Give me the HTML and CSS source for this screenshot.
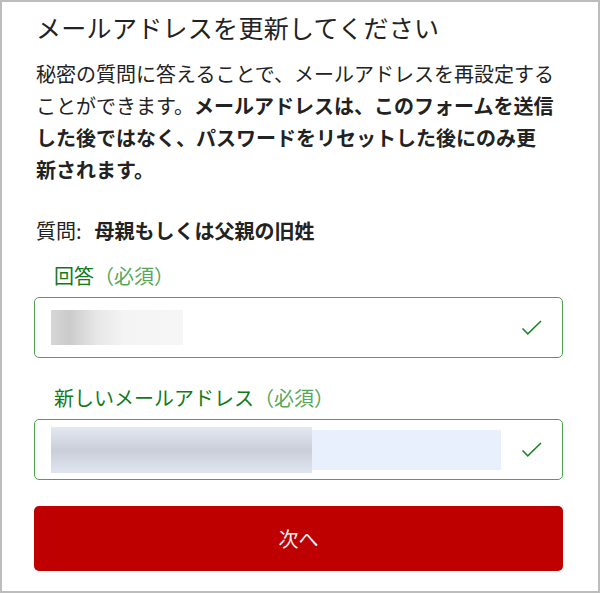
FILE: index.html
```html
<!DOCTYPE html>
<html lang="ja">
<head>
    <meta charset="UTF-8">
    <meta name="viewport" content="width=device-width, initial-scale=1.0">
    <title>メールアドレスを更新してください</title>
    <link rel="stylesheet" href="styles.css">
</head>
<body>
    <div class="frame">
        <h1>メールアドレスを更新してください</h1>

        <p class="intro">秘密の質問に答えることで、メールアドレスを再設定することができます。<strong>メールアドレスは、このフォームを送信した後ではなく、パスワードをリセットした後にのみ更<br>新されます。</strong></p>

        <div class="question">質問:<strong>母親もしくは父親の旧姓</strong></div>

        <div class="form-group">
            <label>回答<span class="req">（必須）</span></label>
            <div class="field">
                <div class="value">
                    <span class="blur blur-answer"></span>
                </div>
                <svg class="check" width="22" height="16" viewBox="0 0 22 16">
                    <path d="M1.5 8.5 L6.8 13.8 L20 1" fill="none" stroke="#23852a" stroke-width="1.6"/>
                </svg>
            </div>
        </div>

        <div class="form-group second">
            <label>新しいメールアドレス<span class="req">（必須）</span></label>
            <div class="field">
                <div class="value autofill">
                    <span class="blur blur-email"></span>
                </div>
                <svg class="check" width="22" height="16" viewBox="0 0 22 16">
                    <path d="M1.5 8.5 L6.8 13.8 L20 1" fill="none" stroke="#23852a" stroke-width="1.6"/>
                </svg>
            </div>
        </div>

        <button class="next-btn">次へ</button>
    </div>
</body>
</html>
```

FILE: styles.css
```css
body {
    margin: 0;
    font-family: "Noto Sans CJK JP", "Noto Sans", sans-serif;
    color: #222;
    background-color: white;
}
.frame {
    width: 600px;
    height: 593px;
    box-sizing: border-box;
    border: 2px solid #bdbdbd;
    padding: 8px 35px 0 32px;
}
h1 {
    margin: 0;
    font-size: 25px;
    font-weight: 400;
    line-height: 34px;
    padding-left: 2px;
    letter-spacing: 0.3px;
}
.intro {
    margin: 14px 0 0;
    font-size: 20px;
    line-height: 32px;
    padding-left: 2px;
}
.intro strong {
    font-weight: 700;
}
.question {
    margin-top: 30px;
    font-size: 20px;
    line-height: 30px;
    padding-left: 2px;
}
.question strong {
    margin-left: 13px;
    font-weight: 700;
}
.form-group {
    margin-top: 16px;
}
.form-group.second {
    margin-top: 26px;
}
label {
    display: block;
    font-size: 20px;
    line-height: 28px;
    color: #137a1a;
    padding-left: 20px;
    margin-bottom: 7px;
}
.req {
    color: #56a85a;
}
.field {
    height: 61px;
    box-sizing: border-box;
    border: 1px solid #4fa250;
    border-radius: 5px;
    display: flex;
    align-items: center;
    padding: 0 19px 0 16px;
}
.value {
    flex: 1;
    height: 36px;
    display: flex;
    align-items: center;
}
.value.autofill {
    height: 40px;
    background-color: #e8effd;
}
.blur {
    display: block;
}
.blur-answer {
    width: 132px;
    height: 35px;
    background: linear-gradient(90deg, #d6d6d6 0%, #cbcbcb 14%, #e6e6e6 34%, #f4f4f4 55%, #f6f6f6 100%);
}
.blur-email {
    width: 261px;
    height: 46px;
    background: linear-gradient(180deg, #e4e8f1 0%, #c9ced8 50%, #e0e5ef 100%);
}
.check {
    display: block;
    margin-left: 20px;
}
.next-btn {
    display: block;
    width: 100%;
    height: 65px;
    margin-top: 26px;
    border: none;
    border-radius: 5px;
    background-color: #be0000;
    color: #f6f6f6;
    font-family: inherit;
    font-size: 20px;
    cursor: pointer;
}
```
